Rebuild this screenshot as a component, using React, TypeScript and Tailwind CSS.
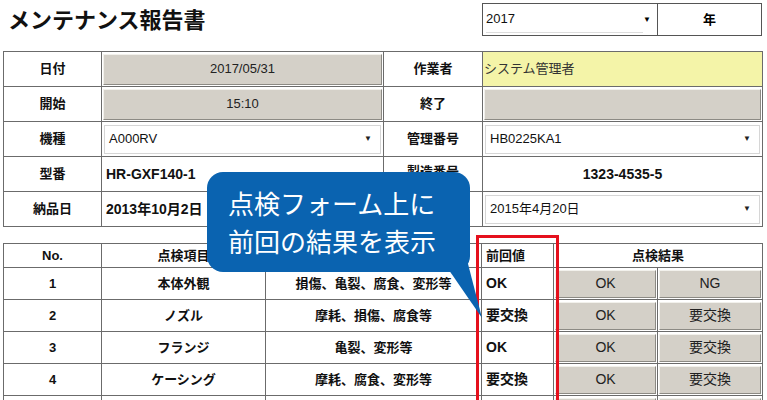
import React from 'react'

const font = "font-['Liberation_Sans','Noto_Sans_CJK_JP',sans-serif]"
const cjk = "font-['Noto_Sans_CJK_JP',sans-serif]"

const td = 'border border-[#6b6b6b] p-0 h-[35px]'
const label = `${td} text-center font-bold text-[13px] text-[#111]`

function GrayButton({ children, className = '' }: { children?: React.ReactNode; className?: string }) {
  return (
    <div
      className={`mx-[1px] flex h-[calc(100%-3px)] items-center justify-center border border-t-[#f2f1ec] border-l-[#f2f1ec] border-b-[#8c8a84] border-r-[#8c8a84] bg-[#d4d0c8] text-[13px] text-[#222] ${className}`}
    >
      {children}
    </div>
  )
}

function SelectBox({ value }: { value: string }) {
  return (
    <div className="mx-[2px] flex h-[29px] items-center justify-between border border-[#d6d6d6] bg-white pl-1 pr-2 text-[13px] text-[#111]">
      <span>{value}</span>
      <span className="text-[8px] text-[#222]">▼</span>
    </div>
  )
}

const rows = [
  { no: 1, item: '本体外観', detail: '損傷、亀裂、腐食、変形等', prev: 'OK', b: 'NG' },
  { no: 2, item: 'ノズル', detail: '摩耗、損傷、腐食等', prev: '要交換', b: '要交換' },
  { no: 3, item: 'フランジ', detail: '亀裂、変形等', prev: 'OK', b: '要交換' },
  { no: 4, item: 'ケーシング', detail: '摩耗、腐食、変形等', prev: '要交換', b: '要交換' },
]

export default function App() {
  return (
    <div className={`relative h-[400px] w-[767px] overflow-hidden bg-white pl-[3px] pr-[5px] ${font}`}>
      {/* title row */}
      <div className="flex h-[51px] items-start justify-between">
        <h1 className={`pl-[5px] pt-[3px] text-[22px] font-bold leading-[30px] text-[#111] ${cjk}`}>
          メンテナンス報告書
        </h1>
        <div className="mt-[3px] flex h-[33px] w-[280px] border border-[#555]">
          <div className="flex w-[175px] items-center justify-between border-r border-[#555] bg-white pl-[3px] pr-[6px]">
            <div className="flex h-[26px] flex-1 items-center border-b border-[#ddd] text-[13px] text-[#111]">2017</div>
            <span className="text-[8px]">▼</span>
          </div>
          <div className="flex flex-1 items-center justify-center text-[13px] font-bold">年</div>
        </div>
      </div>

      {/* form table */}
      <table className="w-[759px] table-fixed border-collapse">
        <colgroup>
          <col className="w-[98px]" />
          <col className="w-[282px]" />
          <col className="w-[99px]" />
          <col className="w-[280px]" />
        </colgroup>
        <tbody>
          <tr>
            <td className={label}>日付</td>
            <td className={td}><GrayButton>2017/05/31</GrayButton></td>
            <td className={label}>作業者</td>
            <td className={`${td} bg-[#f4f4a8] pl-[1px] text-[13px] text-[#333]`}>システム管理者</td>
          </tr>
          <tr>
            <td className={label}>開始</td>
            <td className={td}><GrayButton>15:10</GrayButton></td>
            <td className={label}>終了</td>
            <td className={td}><GrayButton /></td>
          </tr>
          <tr>
            <td className={label}>機種</td>
            <td className={td}><SelectBox value="A000RV" /></td>
            <td className={label}>管理番号</td>
            <td className={td}><SelectBox value="HB0225KA1" /></td>
          </tr>
          <tr>
            <td className={label}>型番</td>
            <td className={`${td} pl-[4px] text-[14px] font-bold text-[#111]`}>HR-GXF140-1</td>
            <td className={`${label} align-top pt-[5px]`}>製造番号</td>
            <td className={`${td} text-center text-[14px] font-bold text-[#111]`}>1323-4535-5</td>
          </tr>
          <tr>
            <td className={label}>納品日</td>
            <td className={`${td} pl-[4px] text-[14px] font-bold text-[#111]`}>2013年10月2日</td>
            <td className={label}></td>
            <td className={td}><SelectBox value="2015年4月20日" /></td>
          </tr>
        </tbody>
      </table>

      {/* inspection table */}
      <table className="mt-[16px] w-[759px] table-fixed border-collapse text-[13px] text-[#111]">
        <colgroup>
          <col className="w-[98px]" />
          <col className="w-[164px]" />
          <col className="w-[216px]" />
          <col className="w-[72px]" />
          <col className="w-[104px]" />
          <col className="w-[105px]" />
        </colgroup>
        <thead>
          <tr className="h-[24px] font-bold">
            <th className="border border-[#6b6b6b]">No.</th>
            <th className="border border-[#6b6b6b]">点検項目</th>
            <th className="border border-[#6b6b6b]"></th>
            <th className="border border-[#6b6b6b] pl-[4px] text-left">前回値</th>
            <th colSpan={2} className="border border-[#6b6b6b]">点検結果</th>
          </tr>
        </thead>
        <tbody>
          {rows.map((r) => (
            <tr key={r.no} className="h-[32px]">
              <td className="border border-[#6b6b6b] text-center font-bold">{r.no}</td>
              <td className="border border-[#6b6b6b] text-center font-bold">{r.item}</td>
              <td className="border border-[#6b6b6b] text-center font-bold">{r.detail}</td>
              <td className="border border-[#6b6b6b] pl-[4px] text-[14px] font-bold">{r.prev}</td>
              <td className="h-[32px] border border-[#6b6b6b] p-0">
                <GrayButton className="text-[14px]">OK</GrayButton>
              </td>
              <td className="h-[32px] border border-[#6b6b6b] p-0">
                <GrayButton className="text-[14px]">{r.b}</GrayButton>
              </td>
            </tr>
          ))}
          <tr className="h-[32px]">
            <td className="border border-[#6b6b6b]" />
            <td className="border border-[#6b6b6b]" />
            <td className="border border-[#6b6b6b]" />
            <td className="border border-[#6b6b6b]" />
            <td className="h-[32px] border border-[#6b6b6b] p-0">
              <GrayButton className="bg-[#a8d89a]" />
            </td>
            <td className="h-[32px] border border-[#6b6b6b] p-0">
              <GrayButton />
            </td>
          </tr>
        </tbody>
      </table>

      {/* red highlight over 前回値 */}
      <div className="absolute left-[476px] top-[235px] h-[180px] w-[83px] border-[3px] border-[#e5101d]" />

      {/* callout */}
      <svg className="absolute left-[440px] top-[260px]" width="50" height="62" viewBox="0 0 50 62">
        <polygon points="2,0 27,0 42,58" fill="#0a63b0" />
      </svg>
      <div
        className={`absolute left-[207px] top-[172px] flex h-[100px] w-[263px] flex-col justify-center rounded-[16px] bg-[#0a63b0] pl-[21px] text-[26px] leading-[38px] text-white ${cjk}`}
      >
        <span>点検フォーム上に</span>
        <span>前回の結果を表示</span>
      </div>
    </div>
  )
}
